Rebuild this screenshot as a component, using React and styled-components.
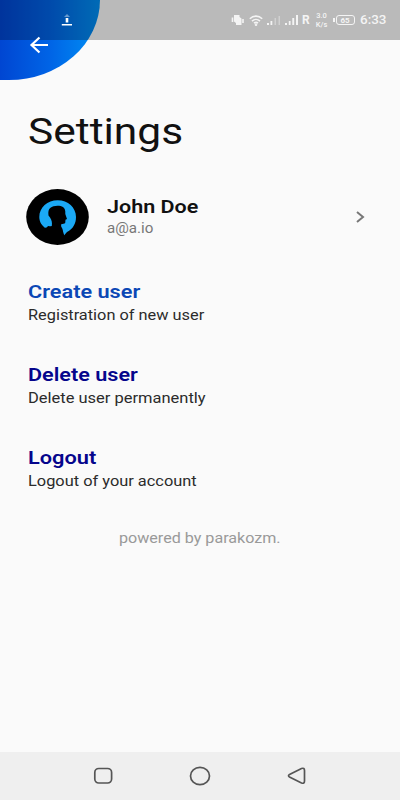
import React from 'react';
import styled, { createGlobalStyle } from 'styled-components';

const GlobalStyle = createGlobalStyle`
  * {
    box-sizing: border-box;
  }
  body {
    margin: 0;
    background: #fafafa;
    font-family: Roboto, "Liberation Sans", sans-serif;
  }
`

const Screen = styled.div`
  position: relative;
  display: flex;
  flex-direction: column;
  width: 400px;
  height: 800px;
  overflow: hidden;
  background: #fafafa;
`

const Corner = styled.div`
  position: absolute;
  top: 0;
  left: 0;
  width: 100px;
  height: 80px;
  border-bottom-right-radius: 91px 80px;
  background: linear-gradient(90deg, #0046d2 0%, #0064e6 50%, #0090f4 100%);
`

const StatusBar = styled.div`
  position: relative;
  display: flex;
  align-items: center;
  height: 40px;
  flex: none;
  padding-left: 61px;
  background: rgba(0, 0, 0, 0.255);
  color: #f4f4f4;
`

const StatusRight = styled.div`
  display: flex;
  align-items: center;
  width: 170px;
  margin-left: auto;
  height: 40px;
`

const Glyph = styled.svg`
  display: block;
  flex: none;
  margin-left: ${p => p.$gap || 0}px;
`

const Roaming = styled.span`
  width: 9px;
  margin-left: 3px;
  font-size: 12px;
  font-weight: 700;
`

const Speed = styled.span`
  display: flex;
  flex-direction: column;
  align-items: center;
  width: 15px;
  margin-left: 3px;
  font-size: 7.5px;
  font-weight: 500;
  line-height: 9px;
`

const Battery = styled.span`
  display: flex;
  align-items: center;
  justify-content: center;
  width: 19px;
  height: 10px;
  margin-left: 1px;
  border: 1px solid #f4f4f4;
  border-radius: 3px;
  font-size: 8px;
  font-weight: 700;
`

const BatteryTip = styled.span`
  width: 1.5px;
  height: 4px;
  margin-left: 4px;
  background: #f4f4f4;
`

const Clock = styled.span`
  margin-left: 5px;
  font-size: 12px;
  font-weight: 500;
  transform: scaleX(1.12);
  transform-origin: left;
`

const BackButton = styled.button`
  position: relative;
  width: 22px;
  height: 20px;
  margin: -5px 0 0 28px;
  padding: 0;
  border: 0;
  background: none;
`

const Content = styled.main`
  flex: 1;
  padding: 0 28px;
`

const Label = styled.span`
  display: block;
  width: max-content;
  white-space: nowrap;
  transform: scaleX(${p => p.$stretch || 1.17});
  transform-origin: left;
`

const Title = styled(Label)`
  margin-top: 55px;
  font-size: 36px;
  line-height: 44px;
  color: #111;
`

const Profile = styled.div`
  display: flex;
  align-items: center;
  height: 56px;
  margin: 35px 0 0 -2px;
`

const ProfileText = styled.div`
  flex: 1;
  margin-left: 18px;
`

const Name = styled(Label)`
  font-size: 17.5px;
  font-weight: 600;
  line-height: 22px;
  color: ${p => p.$color || '#111'};
`

const Note = styled(Label)`
  font-size: 14px;
  line-height: 20px;
  color: ${p => p.$color || '#2b2b2b'};
`

const Option = styled.div`
  display: flex;
  flex-direction: column;
  gap: 2px;
  height: 83px;
`

const Options = styled.div`
  margin-top: 36px;
`

const Footer = styled.div`
  margin: -2px 0 0 91px;
`

const NavBar = styled.nav`
  display: flex;
  align-items: center;
  justify-content: space-between;
  flex: none;
  height: 48px;
  padding: 0 93px;
  background: #efefef;
`

const options = [
  { title: 'Create user', note: 'Registration of new user', color: '#0b47b5', wide: 1.24, noteWide: 1.167 },
  { title: 'Delete user', note: 'Delete user permanently', color: '#05058c', wide: 1.235, noteWide: 1.177 },
  { title: 'Logout', note: 'Logout of your account', color: '#05058c', wide: 1.245, noteWide: 1.17 },
]

const Avatar = () => (
  <Glyph width="63" height="56" viewBox="0 0 63 56">
    <ellipse cx="31.5" cy="28" rx="31.3" ry="28" fill="#000" />
    <path d="M20 39.500C16 37 13.300 33 13.300 28C13.300 18.500 21.500 11.200 31.700 11.200C42 11.200 50 18.500 50 28C50 34.500 47 40 41 43L37.500 47L36 39L22 37Z" fill="#1ba9f5" />
    <path d="M25.800 37C26.300 33.500 25.800 31 24 28.500L22.500 26.500C22 22.500 22.500 20.500 24.500 18.800C27 16.400 34 16 37 18C39 19.300 39.500 21.500 39.300 25L41 30L39.500 30.800L39.200 34C38.500 35 36.500 34.800 35.500 35C34.800 36.500 35 37.500 36 39L38.500 47.500L19 44L19 38.800C21.500 38.500 24 38.500 25.800 37Z" fill="#000" />
  </Glyph>
)

const StatusIcons = () => (
  <>
    <Glyph width="14" height="12" viewBox="0 0 14 12" $gap={1} fill="#f4f4f4">
      <path d="M3 1H8.500V3L10.500 4.500V11H5V9L3 7.500Z" />
      <path d="M1.500 3.500V8M12 5V9" stroke="#f4f4f4" strokeWidth="1.600" />
    </Glyph>
    <Glyph width="14" height="11" viewBox="0 0 14 11" $gap={4} fill="none" stroke="#f4f4f4" strokeWidth="1.600">
      <path d="M.8 3.700C4.400 .2 9.600 .2 13.200 3.700M3 6.100C5.300 3.900 8.700 3.900 11 6.100M5 8.200C6.200 7.200 7.800 7.200 9 8.200" />
      <circle cx="7" cy="9.700" r=".5" />
    </Glyph>
    <Glyph width="15" height="10" viewBox="0 0 15 10" $gap={3} fill="#f4f4f4">
      <path d="M1 8H3V10H1ZM4.500 6H6.300V10H4.500Z" />
      <path d="M8.500 3H10V10H8.500ZM12.500 1H14V10H12.500Z" opacity=".4" />
    </Glyph>
    <Glyph width="15" height="10" viewBox="0 0 15 10" $gap={3} fill="#f4f4f4">
      <path d="M1 8H3V10H1ZM4.800 6H6.600V10H4.800ZM8.300 3H10.200V10H8.300ZM12 0H14V10H12Z" />
    </Glyph>
  </>
)

export default function App() {
  return (
    <Screen>
      <GlobalStyle />
      <Corner />
      <StatusBar>
        <Glyph width="12" height="12" viewBox="0 0 12 12" fill="#fff">
          <path d="M4.700 4H7.300V8.500H4.700ZM.8 10H11V11.500H.8Z" />
          <path d="M6 0L9 3H3Z" opacity=".4" />
        </Glyph>
        <StatusRight>
          <StatusIcons />
          <Roaming>R</Roaming>
          <Speed>
            <span>3.0</span>
            <span>K/s</span>
          </Speed>
          <BatteryTip />
          <Battery>65</Battery>
          <Clock>6:33</Clock>
        </StatusRight>
      </StatusBar>
      <BackButton aria-label="Back">
        <Glyph width="22" height="20" viewBox="0 0 22 20" fill="none" stroke="#fff" strokeWidth="2.200">
          <path d="M20 10H3.500M11.500 2.500L3.500 10L11.500 17.500" />
        </Glyph>
      </BackButton>
      <Content>
        <Title $stretch={1.18}>Settings</Title>
        <Profile>
          <Avatar />
          <ProfileText>
            <Name $stretch={1.23}>John Doe</Name>
            <Note $color="#777" $stretch={1.08}>a@a.io</Note>
          </ProfileText>
          <Glyph width="17" height="14" viewBox="0 0 17 14" fill="none" stroke="#777" strokeWidth="2">
            <path d="M2 2L8 7L2 12" />
          </Glyph>
        </Profile>
        <Options>
          {options.map(o => (
            <Option key={o.title}>
              <Name $color={o.color} $stretch={o.wide}>{o.title}</Name>
              <Note $stretch={o.noteWide}>{o.note}</Note>
            </Option>
          ))}
        </Options>
        <Footer>
          <Note $color="#999" $stretch={1.15}>powered by parakozm.</Note>
        </Footer>
      </Content>
      <NavBar>
        <Glyph width="20" height="18" viewBox="0 0 20 18" fill="none" stroke="#555" strokeWidth="1.700">
          <rect x="1.800" y="1.500" width="16.800" height="14.500" rx="4" />
        </Glyph>
        <Glyph width="22" height="20" viewBox="0 0 22 20" fill="none" stroke="#555" strokeWidth="1.700">
          <ellipse cx="11" cy="10" rx="9.500" ry="8.600" />
        </Glyph>
        <Glyph width="20" height="18" viewBox="0 0 20 18" fill="none" stroke="#555" strokeWidth="1.700">
          <path d="M2.500 7.500L14.500 1.500Q17.500 .5 17.500 3.500V14Q17.500 17 14.500 16L2.500 10Q.5 8.800 2.500 7.500Z" />
        </Glyph>
      </NavBar>
    </Screen>
  );
}
